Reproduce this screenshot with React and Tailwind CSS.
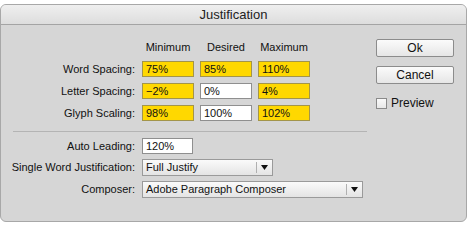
import React from "react";

const font = { fontFamily: '"Liberation Sans", Arial, sans-serif' };

function Field({ value, yellow, w = "w-[52px]" }) {
  return (
    <div
      className={`${w} h-[16px] border ${
        yellow ? "bg-[#ffd800] border-[#a3954a]" : "bg-white border-[#8f8f8f]"
      } pl-[3px] flex items-center text-[11px] leading-none text-[#111]`}
    >
      {value}
    </div>
  );
}

function Select({ value, w }) {
  return (
    <div
      className={`${w} h-[17px] border border-[#9a9a9a] bg-gradient-to-b from-[#fafafa] to-[#e4e4e4] flex items-center text-[11px] leading-none text-[#111]`}
    >
      <div className="flex-1 pl-[3px]">{value}</div>
      <div className="w-[1px] h-[11px] bg-[#b0b0b0]" />
      <div className="w-[15px] flex items-center justify-center">
        <svg width="7" height="5" viewBox="0 0 7 5">
          <path d="M0 0 H7 L3.5 5 Z" fill="#111" />
        </svg>
      </div>
    </div>
  );
}

function Label({ children }) {
  return (
    <div className="w-[135px] text-right text-[11px] leading-none text-[#111] pr-[1px]">
      {children}
    </div>
  );
}

function Button({ children }) {
  return (
    <div className="w-[78px] h-[18px] border border-[#8c8c8c] rounded-[2px] bg-gradient-to-b from-[#fbfbfb] to-[#e6e6e6] flex items-center justify-center text-[12px] leading-none text-[#111]">
      {children}
    </div>
  );
}

export default function App() {
  const rows = [
    ["Word Spacing:", ["75%", true], ["85%", true], ["110%", true]],
    ["Letter Spacing:", ["\u22122%", true], ["0%", false], ["4%", true]],
    ["Glyph Scaling:", ["98%", true], ["100%", false], ["102%", true]],
  ];
  return (
    <div className="w-[474px] h-[232px] bg-white pt-[4px]" style={font}>
      <div className="w-[467px] h-[218px] rounded-[6px] border border-[#a8a8a8] bg-[#d6d6d6] overflow-hidden flex flex-col">
        <div className="h-[20px] shrink-0 border-b border-[#a4a4a4] bg-gradient-to-b from-[#efefef] to-[#dddddd] flex items-center justify-center text-[13px] text-[#222]">
          Justification
        </div>
        <div className="flex flex-1">
          <div className="w-[375px] pt-[14px]">
            <div className="grid grid-cols-[135px_52px_52px_52px] gap-x-[6px] gap-y-[6px] items-center">
              <div />
              <div className="h-[16px] flex items-center justify-center text-[11px] text-[#111]">Minimum</div>
              <div className="h-[16px] flex items-center justify-center text-[11px] text-[#111]">Desired</div>
              <div className="h-[16px] flex items-center justify-center text-[11px] text-[#111]">Maximum</div>
              {rows.map((r) => (
                <React.Fragment key={r[0]}>
                  <Label>{r[0]}</Label>
                  <Field value={r[1][0]} yellow={r[1][1]} />
                  <Field value={r[2][0]} yellow={r[2][1]} />
                  <Field value={r[3][0]} yellow={r[3][1]} />
                </React.Fragment>
              ))}
            </div>
            <div className="ml-[12px] mt-[10px] w-[354px] h-[1px] bg-[#b4b4b4]" />
            <div className="mt-[6px] flex flex-col gap-y-[5px]">
              <div className="flex items-center gap-x-[6px]">
                <Label>Auto Leading:</Label>
                <Field value="120%" w="w-[51px]" />
              </div>
              <div className="flex items-center gap-x-[6px]">
                <Label>Single Word Justification:</Label>
                <Select value="Full Justify" w="w-[131px]" />
              </div>
              <div className="flex items-center gap-x-[6px]">
                <Label>Composer:</Label>
                <Select value="Adobe Paragraph Composer" w="w-[221px]" />
              </div>
            </div>
          </div>
          <div className="pt-[14px] flex flex-col">
            <Button>Ok</Button>
            <div className="mt-[9px]">
              <Button>Cancel</Button>
            </div>
            <div className="mt-[13px] flex items-center gap-x-[4px]">
              <div className="w-[11px] h-[11px] border border-[#8a8a8a] bg-gradient-to-b from-[#fafafa] to-[#e8e8e8]" />
              <div className="text-[12px] leading-none text-[#111]">Preview</div>
            </div>
          </div>
        </div>
      </div>
    </div>
  );
}
